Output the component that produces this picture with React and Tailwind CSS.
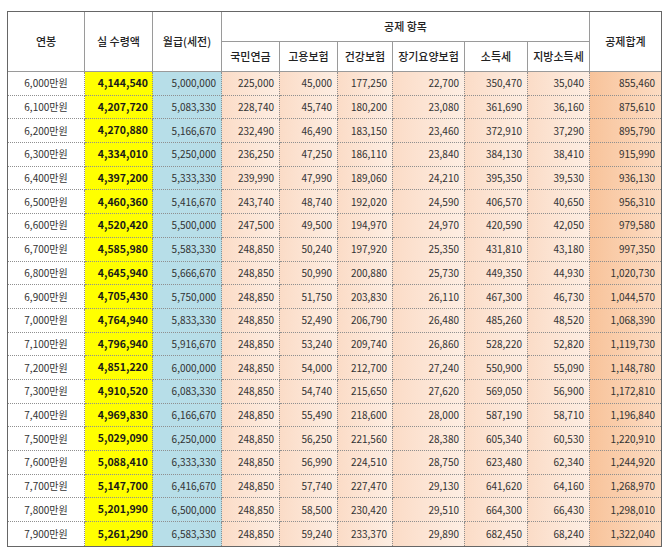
import React from "react";

const rows = [
  ["6,000만원","4,144,540","5,000,000","225,000","45,000","177,250","22,700","350,470","35,040","855,460"],
  ["6,100만원","4,207,720","5,083,330","228,740","45,740","180,200","23,080","361,690","36,160","875,610"],
  ["6,200만원","4,270,880","5,166,670","232,490","46,490","183,150","23,460","372,910","37,290","895,790"],
  ["6,300만원","4,334,010","5,250,000","236,250","47,250","186,110","23,840","384,130","38,410","915,990"],
  ["6,400만원","4,397,200","5,333,330","239,990","47,990","189,060","24,210","395,350","39,530","936,130"],
  ["6,500만원","4,460,360","5,416,670","243,740","48,740","192,020","24,590","406,570","40,650","956,310"],
  ["6,600만원","4,520,420","5,500,000","247,500","49,500","194,970","24,970","420,590","42,050","979,580"],
  ["6,700만원","4,585,980","5,583,330","248,850","50,240","197,920","25,350","431,810","43,180","997,350"],
  ["6,800만원","4,645,940","5,666,670","248,850","50,990","200,880","25,730","449,350","44,930","1,020,730"],
  ["6,900만원","4,705,430","5,750,000","248,850","51,750","203,830","26,110","467,300","46,730","1,044,570"],
  ["7,000만원","4,764,940","5,833,330","248,850","52,490","206,790","26,480","485,260","48,520","1,068,390"],
  ["7,100만원","4,796,940","5,916,670","248,850","53,240","209,740","26,860","528,220","52,820","1,119,730"],
  ["7,200만원","4,851,220","6,000,000","248,850","54,000","212,700","27,240","550,900","55,090","1,148,780"],
  ["7,300만원","4,910,520","6,083,330","248,850","54,740","215,650","27,620","569,050","56,900","1,172,810"],
  ["7,400만원","4,969,830","6,166,670","248,850","55,490","218,600","28,000","587,190","58,710","1,196,840"],
  ["7,500만원","5,029,090","6,250,000","248,850","56,250","221,560","28,380","605,340","60,530","1,220,910"],
  ["7,600만원","5,088,410","6,333,330","248,850","56,990","224,510","28,750","623,480","62,340","1,244,920"],
  ["7,700만원","5,147,700","6,416,670","248,850","57,740","227,470","29,130","641,620","64,160","1,268,970"],
  ["7,800만원","5,201,990","6,500,000","248,850","58,500","230,420","29,510","664,300","66,430","1,298,010"],
  ["7,900만원","5,261,290","6,583,330","248,850","59,240","233,370","29,890","682,450","68,240","1,322,040"],
];

const subHeads = ["국민연금", "고용보험", "건강보험", "장기요양보험", "소득세", "지방소득세"];

function cellClass(ci, ri) {
  const base = "flex items-center border-[#8f8f8f] border-dotted";
  const right = ci < 9 ? " border-r" : "";
  const bottom = ri < rows.length - 1 ? " border-b" : "";
  let extra = "";
  if (ci === 0) extra = " justify-center bg-white text-[#333]";
  else if (ci === 1) extra = " justify-end pr-[4px] bg-[#ffff00] font-bold text-[#1a1a1a] text-[10.5px]";
  else if (ci === 2) extra = " justify-end pr-[5px] bg-[#b7dee8] text-[#333]";
  else if (ci === 9) extra = " justify-end pr-[6px] bg-gradient-to-r from-[#f8c39a] to-[#fcdcc3] text-[#333]";
  else extra = " justify-end pr-[5px] bg-gradient-to-r from-[#fbdcc7] to-[#fdeee3] text-[#333]";
  return base + right + bottom + extra;
}

export default function App() {
  return (
    <div className="w-[670px] h-[555px] bg-white font-['Noto_Sans_CJK_KR','Noto_Sans',sans-serif] overflow-hidden">
      <div className="ml-[7px] mt-[11px] w-[655px] border border-[#666]">
        <div className="grid grid-cols-[77px_68px_69px_58px_58px_55px_72px_63px_62px_71px] grid-rows-[30px_30px_repeat(20,23.7px)] text-[10px] leading-none">
          <div className="row-span-2 flex items-center justify-center border-r border-b border-[#9a9a9a] text-[11px] font-medium text-[#222]">연봉</div>
          <div className="row-span-2 flex items-center justify-center border-r border-b border-[#9a9a9a] text-[11px] font-medium text-[#222]">실 수령액</div>
          <div className="row-span-2 flex items-center justify-center border-r border-b border-[#9a9a9a] text-[11px] font-medium text-[#222]">월급(세전)</div>
          <div className="col-span-6 flex items-center justify-center border-r border-b border-[#9a9a9a] text-[11px] font-medium text-[#222]">공제 항목</div>
          <div className="row-span-2 flex items-center justify-center border-b border-[#9a9a9a] text-[11px] font-medium text-[#222]">공제합계</div>
          {subHeads.map((h) => (
            <div key={h} className="flex items-center justify-center border-r border-b border-[#9a9a9a] text-[11px] font-medium text-[#222]">{h}</div>
          ))}
          {rows.map((r, ri) =>
            r.map((v, ci) => (
              <div key={ri + "-" + ci} className={cellClass(ci, ri)}>{v}</div>
            ))
          )}
        </div>
      </div>
    </div>
  );
}
